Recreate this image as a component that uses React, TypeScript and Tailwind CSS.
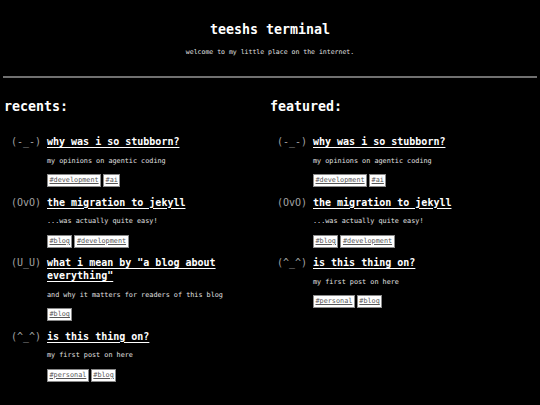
type Post = {
  face: string;
  title: string;
  desc: string;
  tags: string[];
};

const recents: Post[] = [
  { face: "(-_-)", title: "why was i so stubborn?", desc: "my opinions on agentic coding", tags: ["#development", "#ai"] },
  { face: "(OvO)", title: "the migration to jekyll", desc: "...was actually quite easy!", tags: ["#blog", "#development"] },
  { face: "(U_U)", title: 'what i mean by "a blog about everything"', desc: "and why it matters for readers of this blog", tags: ["#blog"] },
  { face: "(^_^)", title: "is this thing on?", desc: "my first post on here", tags: ["#personal", "#blog"] },
];

const featured: Post[] = [recents[0], recents[1], recents[3]];

function PostItem({ post }: { post: Post }) {
  return (
    <div className="flex pl-[7px]">
      <div className="w-[36px] shrink-0 text-[10px] leading-[13px] text-[#a3a3a3]">{post.face}</div>
      <div className="flex flex-col pr-[4px]">
        <a href="#" className="text-[10px] leading-[13px] font-bold text-white underline underline-offset-2 decoration-1">
          {post.title}
        </a>
        <p className="mt-[8.5px] text-[6.8px] leading-[8px] text-[#e0e0e0]">{post.desc}</p>
        <div className="mt-[9.5px] flex gap-[2px]">
          {post.tags.map((t) => (
            <span
              key={t}
              className="h-[13px] flex items-center bg-white border border-[#8a8a8a] px-[1.5px] text-[6.8px] text-[#555] underline"
            >
              {t}
            </span>
          ))}
        </div>
      </div>
    </div>
  );
}

function Column({ heading, posts }: { heading: string; posts: Post[] }) {
  return (
    <section className="flex flex-col">
      <h2 className="text-[13.3px] leading-[16px] font-bold text-white">{heading}</h2>
      <div className="mt-[20px] flex flex-col gap-[8.5px]">
        {posts.map((p) => (
          <PostItem key={p.title} post={p} />
        ))}
      </div>
    </section>
  );
}

export default function App() {
  return (
    <main
      className="min-h-screen w-full bg-black text-white antialiased"
      style={{ fontFamily: '"DejaVu Sans Mono", "Liberation Mono", monospace' }}
    >
      <header className="pt-[22px] flex flex-col items-center">
        <h1 className="text-[13.3px] leading-[16px] font-bold">teeshs terminal</h1>
        <p className="mt-[10px] text-[6.5px] leading-[8px] text-[#e0e0e0]">welcome to my little place on the internet.</p>
      </header>
      <div className="mx-[3px] mt-[20px] h-[2px] bg-[#707070]" />
      <div className="mt-[21px] px-[4px] grid grid-cols-2">
        <Column heading="recents:" posts={recents} />
        <Column heading="featured:" posts={featured} />
      </div>
    </main>
  );
}
